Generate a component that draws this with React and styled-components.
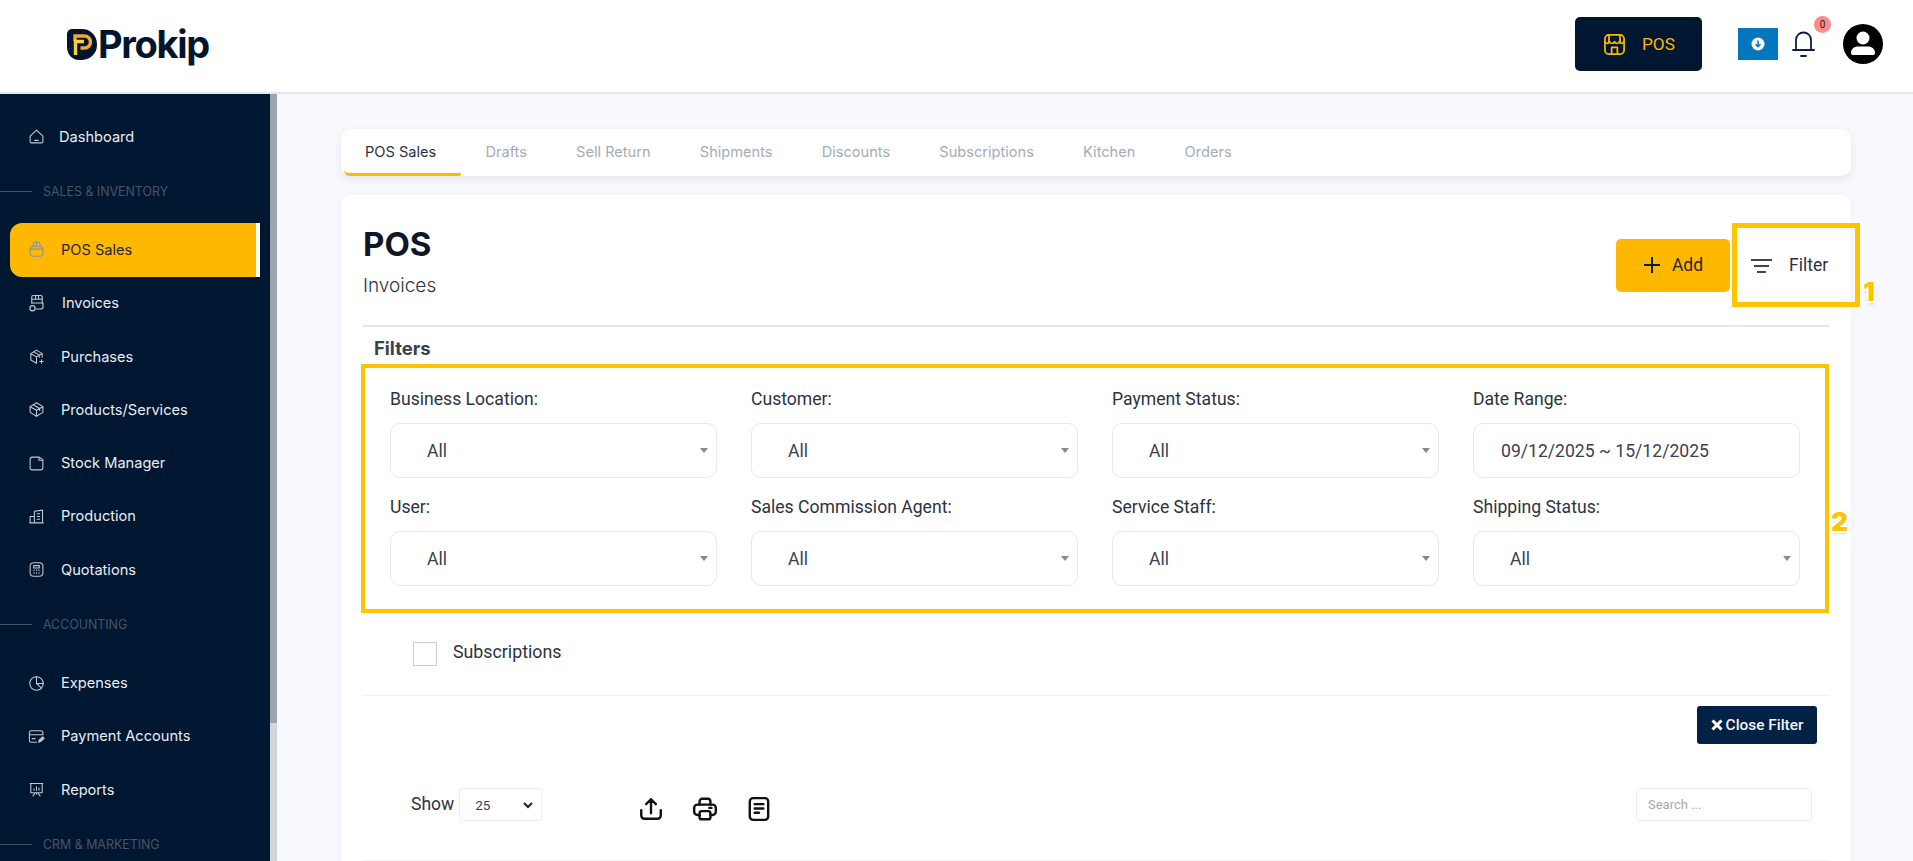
import React from 'react';
import styled, { createGlobalStyle } from 'styled-components';

const Global = createGlobalStyle`
  html, body { margin: 0; padding: 0; background: #f8f9fe; }
  * { box-sizing: border-box; }
  body { font-family: Inter, "Liberation Sans", sans-serif; }
`;

const Page = styled.div`
  width: 1913px; height: 861px; overflow: hidden;
  display: flex; flex-direction: column; background: #f8f9fe;
`;
const Header = styled.header`
  height: 94px; flex: none; background: #fff; border-bottom: 2px solid #e4e6ee;
  display: flex; align-items: center; padding: 0 0 0 67px;
`;
const Logo = styled.div`display: flex; align-items: center; gap: 1px; margin-top: -4px;`;
const LogoText = styled.span`
  font: 700 38px/1 Inter, sans-serif; color: #02152f; letter-spacing: -1.300px;
`;
const HeaderRight = styled.div`margin-left: auto; display: flex; align-items: center; padding-right: 30px; margin-top: -4px;`;
const PosButton = styled.button`
  width: 127px; height: 54px; border: 0; border-radius: 5px; background: #001731; color: #ffb800;
  display: flex; align-items: center; gap: 16px; padding: 0 0 0 28px;
  font: 400 17.200px Roboto, sans-serif; margin-right: 36px;
`;
const Download = styled.div`
  width: 40px; height: 32px; background: #0277bd; display: flex; align-items: center; justify-content: center; margin-right: 14px;
`;
const BellWrap = styled.div`position: relative; width: 23px; height: 28px; color: #0f1d4a; margin-right: 28px;`;
const Badge = styled.span`
  position: absolute; left: 22px; top: -14px; width: 17px; height: 17px; border-radius: 50%;
  background: #ff8a8a; color: #222; font: 400 10px/17px Roboto, sans-serif; text-align: center;
`;
const Body = styled.div`flex: 1; display: flex; min-height: 0;`;
const Sidebar = styled.nav`
  width: 270px; flex: none; background: #001731; overflow: hidden; padding-top: 16px;
  display: flex; flex-direction: column;
`;
const Scroll = styled.div`width: 7px; flex: none; background: #d2d5da;`;
const Thumb = styled.div`height: 629px; background: #9da3af;`;
const NavItem = styled.div`
  height: 53.300px; flex: none; display: flex; align-items: center; width: ${p => p.$active ? '250px' : '100%'};
  margin-left: ${p => p.$active ? '10px' : '0'};
  padding-left: ${p => p.$active ? '18px' : '28px'};
  gap: ${p => p.$gap}px;
  color: ${p => p.$active ? '#27272f' : '#e9ecf2'};
  font: 400 14.600px Inter, sans-serif;
  background: ${p => p.$active ? '#ffb800' : 'transparent'};
  border-radius: ${p => p.$active ? '12px 0 0 12px' : '0'};
  border-right: ${p => p.$active ? '4px solid #fff' : '0'};
  svg { flex: none; color: ${p => p.$active ? '#8f9296' : '#c3c7cf'}; }
`;
const Section = styled.div`
  display: flex; align-items: center; gap: 11px; height: 60px; padding-bottom: 4px; flex: none;
  color: #475467; font: 400 12.400px Inter, sans-serif;
  &::before { content: ""; width: 32px; height: 1px; background: #475467; }
`;
const Main = styled.main`flex: 1; min-width: 0; padding: 35px 0 0 64px; margin-right: 62px;`;
const Tabs = styled.div`
  height: 47px; background: #fff; border-radius: 10px; display: flex; padding-left: 3px;
  box-shadow: 0 3px 8px rgba(30,40,80,.09);
`;
const Tab = styled.div`
  padding: 1px 24.600px 0; height: 47px; display: flex; align-items: center;
  padding-left: ${p => p.$active ? '21px' : '24.600px'};
  font: 400 14.600px Inter, sans-serif; color: ${p => p.$active ? '#2c3444' : '#a5abb8'};
  border-bottom: 3px solid ${p => p.$active ? '#ffb800' : 'transparent'};
  border-radius: 0 0 2px 6px;
`;
const Card = styled.section`
  margin-top: 19px; background: #fff; border-radius: 10px 10px 0 0; height: 700px;
  padding: 0 22px; box-shadow: 0 0 6px rgba(30,40,80,.04);
`;
const CardHead = styled.div`
  height: 132px; border-bottom: 2px solid #e6e6e8; display: flex; justify-content: space-between;
  position: relative;
`;
const TitleBlock = styled.div`padding-top: 29px;`;
const Title = styled.h1`margin: 0; font: 700 33px/40px Inter, sans-serif; color: #101828;`;
const Subtitle = styled.div`margin-top: 11px; font: 300 19px/22px Inter, sans-serif; color: #2d3340;`;
const Actions = styled.div`display: flex; align-items: flex-start; padding-top: 44px;`;
const AddButton = styled.button`
  width: 114px; height: 53px; border: 0; border-radius: 5px; background: #ffb800; color: #27272f;
  display: flex; align-items: center; justify-content: center; gap: 11px; padding: 0 0 2px;
  font: 400 17.500px Roboto, sans-serif;
`;
const FilterButton = styled.button`
  width: 128px; height: 84px; margin: -16px -31px 0 2px; background: transparent;
  border: 5px solid #ffc400; display: flex; align-items: flex-start; padding: 27px 0 0 14px; gap: 17px;
  font: 400 17.500px Roboto, sans-serif; color: #2b3446; position: relative;
  svg { margin-top: 3px; }
`;
const Mark = styled.span`
  position: absolute; font: 900 ${p => p.$size}px/1 Inter, sans-serif; color: #ffc400;
  text-shadow: 1.500px 0 0 #fff, -1.500px 0 0 #fff, 0 1.500px 0 #fff, 0 -1.500px 0 #fff,
    1.500px 1.500px 0 #fff, -1.500px 1.500px 0 #fff, 1.500px -1.500px 0 #fff, -1.500px -1.500px 0 #fff,
    0 2px 4px rgba(0,0,0,.25);
`;
const FiltersLabel = styled.h3`margin: 0; padding: 10px 0 0 11px; height: 37px; font: 700 18.500px/22px Inter, sans-serif; color: #3a3f4a;`;
const FilterBox = styled.div`
  width: 1468px; height: 249px; margin-left: -2px; border: 4px solid #ffc400; padding: 18px 25px 0 25px;
  display: grid; grid-template-columns: repeat(4, 327px); column-gap: 34px; row-gap: 0; grid-auto-rows: 108px;
  position: relative;
`;
const Field = styled.div`display: flex; flex-direction: column;`;
const Label = styled.label`font: 400 17.600px/26px Roboto, sans-serif; color: #2d3340; height: 37px;`;
const SelectBox = styled.div`
  height: 55px; border: 1px solid #e9e9ec; border-radius: 10px; display: flex; align-items: center;
  padding-left: ${p => p.$date ? '27px' : '36px'}; position: relative;
  font: 400 17.600px Roboto, sans-serif; color: #3b4150;
  ${p => p.$date ? '' : `&::after { content: ""; position: absolute; right: 8px; top: 24px;
    border-left: 4px solid transparent; border-right: 4px solid transparent; border-top: 5px solid #888; }`}
`;
const SubRow = styled.div`
  height: 83px; margin-top: 0; border-bottom: 1px solid #f1f2f5; display: flex; align-items: flex-start; gap: 16px;
  padding: 29px 0 0 50px; font: 400 17.800px/20px Roboto, sans-serif; color: #2d3340;
`;
const Checkbox = styled.span`width: 24px; height: 24px; border: 1px solid #cfcdc8; display: block;`;
const CloseRow = styled.div`display: flex; justify-content: flex-end; padding: 10px 12px 0 0;`;
const CloseButton = styled.button`
  width: 120px; height: 38px; border: 0; border-radius: 3px; background: #012245; color: #f1f3f6;
  font: 500 15.400px Roboto, sans-serif; padding: 0; display: flex; align-items: center; justify-content: center; gap: 3px;
`;
const Toolbar = styled.div`
  height: 117px; border-bottom: 1px solid #eef0f5; display: flex; align-items: flex-start; padding: 44px 17px 0 48px;
`;
const ShowLabel = styled.span`font: 400 17.500px/32px Roboto, sans-serif; color: #2d3340; margin-right: 5px;`;
const SizeSelect = styled.div`
  width: 83px; height: 33px; border: 1px solid #eceded; border-radius: 3px; display: flex; align-items: center;
  justify-content: space-between; padding: 0 8px 0 15px; font: 400 13.500px Roboto, sans-serif; color: #3b4150;
`;
const ToolIcons = styled.div`display: flex; gap: 28px; align-items: center; margin: 8px 0 0 96px; color: #111;`;
const Search = styled.div`
  margin-left: auto; width: 176px; height: 33px; border: 1px solid #eceded; border-radius: 3px; padding-left: 11px;
  display: flex; align-items: center; font: 400 13px Roboto, sans-serif; color: #a8a8a8;
`;

const S = ({ size = 20, sw = 1.5, children, vb = 24 }) => (
  <svg width={size} height={size} viewBox={`0 0 ${vb} ${vb}`} fill="none" stroke="currentColor" strokeWidth={sw} strokeLinecap="round" strokeLinejoin="round">{children}</svg>
);

const nav = {
  home: <><path d="M3 11.500 12 3l9 8.500V19a2 2 0 0 1-2 2H5a2 2 0 0 1-2-2z" /><path d="M9.500 17.500h5" /></>,
  bag: <><rect x="3" y="7.500" width="18" height="14" rx="4" /><path d="M7 8V6a5 5 0 0 1 10 0v2M12 2v6M3 11.500h18" /></>,
  invoice: <><path d="M5 12V4a2 2 0 0 1 2-2h10a2 2 0 0 1 2 2v8M5 7h14M10 2v5M14 2v5" /><path d="M11 20h6a3 3 0 0 0 3-3v-5H5" /><circle cx="6" cy="19" r="3.500" /></>,
  boxPlus: <><path d="M20 13V8l-8-5-8 5v9l8 4.500" /><path d="M4 8l8 4.500L20 8M12 12.500V21M8 5.500l8 4.500v3" /><path d="M19 16.500v5M16.500 19h5" /></>,
  box: <><path d="M21 8v8l-9 5.500L3 16V8l9-5.500z" /><path d="M3 8l9 5 9-5M12 13v8.500M7.500 5.200l9 5.300v3" /></>,
  folder: <><path d="M3 6a3 3 0 0 1 3-3h10l5 4v11a3 3 0 0 1-3 3H6a3 3 0 0 1-3-3z" /><path d="M15.500 3.500V7.500H21" /></>,
  building: <><path d="M3 21V12h6M9 21V4.500L20.500 3v18zM2.500 21h19" /><path d="M13 8h3.500M13 12h3.500M13 16h3.500" /></>,
  calc: <><rect x="3" y="2.500" width="18" height="19" rx="5" /><rect x="8" y="6.500" width="8" height="3.500" /><path d="M8.500 13h.01M12 13h.01M15.500 13h.01M8.500 17h.01M12 17h.01M15.500 17h.01" strokeWidth="2" /></>,
  pie: <><circle cx="12" cy="12" r="9.500" /><path d="M12 2.500V12l7 6.500M12 12h9.500" /></>,
  card: <><path d="M21 9V6.500a2.500 2.500 0 0 0-2.500-2.500h-14A2.500 2.500 0 0 0 2 6.500v11A2.500 2.500 0 0 0 4.500 20H12" /><path d="M2 9.500h19M6 15h4" /><path d="m15 20 .8-3 5-4.500 2 2-5 4.700z" fill="currentColor" /></>,
  board: <><path d="M3 3.500h18M4 3.500v13h16v-13M12 16.500v2M7 21l3-4M17 21l-3-4M7 21h.01M17 21h.01" /><path d="M8.500 13v-2M12 13V8M15.500 13v-3" /></>,
};

const items = [
  { t: 'Dashboard', i: 'home', gap: 14, size: 17 },
  { s: 'SALES & INVENTORY' },
  { t: 'POS Sales', i: 'bag', active: true, gap: 16, size: 17 },
  { t: 'Invoices', i: 'invoice', gap: 16, size: 18 },
  { t: 'Purchases', i: 'boxPlus', gap: 16, size: 17 },
  { t: 'Products/Services', i: 'box', gap: 16, size: 17 },
  { t: 'Stock Manager', i: 'folder', gap: 16, size: 17 },
  { t: 'Production', i: 'building', gap: 16, size: 17 },
  { t: 'Quotations', i: 'calc', gap: 16, size: 17 },
  { s: 'ACCOUNTING' },
  { t: 'Expenses', i: 'pie', gap: 16, size: 17 },
  { t: 'Payment Accounts', i: 'card', gap: 16, size: 17 },
  { t: 'Reports', i: 'board', gap: 16, size: 17 },
  { s: 'CRM & MARKETING' },
];

const tabs = ['POS Sales', 'Drafts', 'Sell Return', 'Shipments', 'Discounts', 'Subscriptions', 'Kitchen', 'Orders'];
const fields = [
  ['Business Location:', 'All'], ['Customer:', 'All'], ['Payment Status:', 'All'], ['Date Range:', '09/12/2025 ~ 15/12/2025', true],
  ['User:', 'All'], ['Sales Commission Agent:', 'All'], ['Service Staff:', 'All'], ['Shipping Status:', 'All'],
];

export default function App() {
  return (
    <Page>
      <Global />
      <Header>
        <Logo>
          <svg width="30" height="31" viewBox="0 0 30 31">
            <path d="M0 5a5 5 0 0 1 5-5h10a15 15 0 0 1 15 15v1a15 15 0 0 1-15 15h-3C5 31 0 25 0 18z" fill="#02152f" />
            <path d="M8 12V7h9.500a6 6 0 0 1 0 12H13.500" fill="none" stroke="#f4a92a" strokeWidth="3.400" />
            <path d="M8.500 26V12.500h8.500" fill="none" stroke="#f7d13c" strokeWidth="3.400" />
          </svg>
          <LogoText>Prokip</LogoText>
        </Logo>
        <HeaderRight>
          <PosButton>
            <S size={23} sw={1.8}>
              <rect x="2" y="2" width="20" height="20" rx="4" />
              <path d="M2 9c1.500 2.500 4.500 2.500 5 0 .7 2.500 4 2.500 5 0 1 2.500 4.300 2.500 5 0 .5 2.500 3.500 2.500 5 0M6.500 2.500 6 9M17.500 2.500 18 9M9 21.500V15h6v6.500" />
            </S>
            POS
          </PosButton>
          <Download>
            <svg width="14" height="14" viewBox="0 0 14 14"><circle cx="7" cy="7" r="6.500" fill="#fff" /><path d="M7 3.500v6M4.500 7.200 7 9.700l2.500-2.500" fill="none" stroke="#0277bd" strokeWidth="1.500" /></svg>
          </Download>
          <BellWrap>
            <svg width="23" height="28" viewBox="0 0 23 28" fill="none" stroke="currentColor" strokeWidth="1.800" strokeLinecap="round">
              <path d="M4 19.500V10a7.500 7.500 0 0 1 15 0v9.500M1 20h21M9 26h5" />
            </svg>
            <Badge>0</Badge>
          </BellWrap>
          <svg width="40" height="40" viewBox="0 0 40 40">
            <circle cx="20" cy="20" r="20" fill="#000" />
            <circle cx="20" cy="14" r="6.500" fill="#fff" />
            <path d="M8 29c0-4 3-6.500 7-6.500h10c4 0 7 2.500 7 6.500a2 2 0 0 1-2 2H10a2 2 0 0 1-2-2z" fill="#fff" />
          </svg>
        </HeaderRight>
      </Header>
      <Body>
        <Sidebar>
          {items.map((it) => it.s ? <Section key={it.s}>{it.s}</Section> : (
            <NavItem key={it.t} $active={it.active} $gap={it.gap}>
              <S size={it.size}>{nav[it.i]}</S>
              <span>{it.t}</span>
            </NavItem>
          ))}
        </Sidebar>
        <Scroll><Thumb /></Scroll>
        <Main>
          <Tabs>
            {tabs.map((t, i) => <Tab key={t} $active={i === 0}>{t}</Tab>)}
          </Tabs>
          <Card>
            <CardHead>
              <TitleBlock>
                <Title>POS</Title>
                <Subtitle>Invoices</Subtitle>
              </TitleBlock>
              <Actions>
                <AddButton>
                  <svg width="18" height="18" viewBox="0 0 18 18" stroke="#111c2e" strokeWidth="2"><path d="M9 1v16M1 9h16" /></svg>
                  Add
                </AddButton>
                <FilterButton>
                  <svg width="21" height="16" viewBox="0 0 21 16" stroke="#3d4656" strokeWidth="2"><path d="M0 2h21M3 8h15M6 14h9" /></svg>
                  Filter
                  <Mark $size={26} style={{ right: -20, bottom: -3 }}>1</Mark>
                </FilterButton>
              </Actions>
            </CardHead>
            <FiltersLabel>Filters</FiltersLabel>
            <FilterBox>
              {fields.map(([l, v, d]) => (
                <Field key={l}>
                  <Label>{l}</Label>
                  <SelectBox $date={d}>{v}</SelectBox>
                </Field>
              ))}
              <Mark $size={26} style={{ right: -23, top: 141 }}>2</Mark>
            </FilterBox>
            <SubRow><Checkbox />Subscriptions</SubRow>
            <CloseRow>
              <CloseButton>
                <svg width="12" height="12" viewBox="0 0 12 12" stroke="#fff" strokeWidth="3"><path d="M1.500 1.500l9 9M10.500 1.500l-9 9" /></svg>
                Close Filter
              </CloseButton>
            </CloseRow>
            <Toolbar>
              <ShowLabel>Show</ShowLabel>
              <SizeSelect>25
                <svg width="10" height="8" viewBox="0 0 10 8" fill="none" stroke="#222" strokeWidth="2"><path d="M1 2l4 4 4-4" /></svg>
              </SizeSelect>
              <ToolIcons>
                <S size={26} sw={2.2}><path d="M3 13v5a3 3 0 0 0 3 3h12a3 3 0 0 0 3-3v-5M12 16V3M7.500 7.500 12 3l4.500 4.500" /></S>
                <S size={26} sw={2.2}><path d="M7 8V5a2.500 2.500 0 0 1 2.500-2.500h5A2.500 2.500 0 0 1 17 5v3" /><path d="M7 17.500H5a3 3 0 0 1-3-3V11a3 3 0 0 1 3-3h14a3 3 0 0 1 3 3v3.500a3 3 0 0 1-3 3h-2" /><rect x="7" y="14" width="10" height="7.500" rx="2" /><path d="M16 11h2" /></S>
                <S size={26} sw={2.2}><rect x="3.500" y="2" width="17" height="20" rx="3" /><path d="M8 7.500h8M8 11.500h8M8 15.500h4" /></S>
              </ToolIcons>
              <Search>Search ...</Search>
            </Toolbar>
          </Card>
        </Main>
      </Body>
    </Page>
  );
}
